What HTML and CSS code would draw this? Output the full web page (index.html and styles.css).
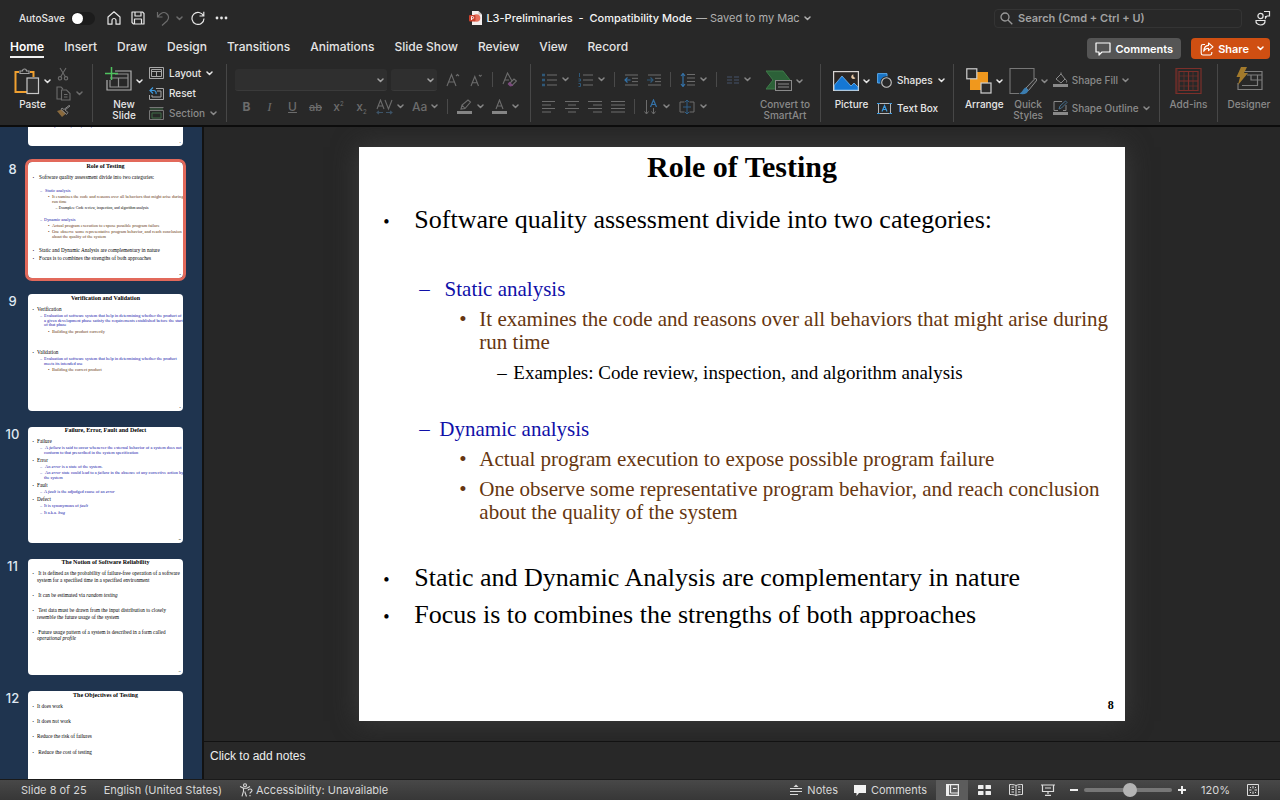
FILE: index.html
```html
<!DOCTYPE html>
<html lang="en">
<head>
<meta charset="utf-8">
<title>L3-Preliminaries</title>
<link rel="stylesheet" href="styles.css">
</head>
<body>
<svg class="defs" aria-hidden="true">
  <symbol id="chev" viewBox="0 0 7 5"><path d="M1 1l2.500 2.500L6 1" fill="none" stroke="currentColor" stroke-width="1.500" stroke-linecap="round" stroke-linejoin="round"/></symbol>
  <symbol id="comment" viewBox="0 0 16 14"><path d="M1 1h14v9H7l-3 3v-3H1z" fill="none" stroke="currentColor" stroke-width="1.200" stroke-linejoin="round"/></symbol>
</svg>
<div class="app">
  <header class="titlebar">
    <div class="quick">
      <label class="autosave">AutoSave <input type="checkbox" class="switch"></label>
      <button class="plain" aria-label="Home"><svg width="14" height="14" viewBox="0 0 14 14" fill="none" stroke="currentColor" stroke-width="1.200" stroke-linejoin="round"><path d="M1 6L7 .8 13 6v7.200H9V9.500a2 2 0 0 0-4 0v3.700H1z"/></svg></button>
      <button class="plain" aria-label="Save"><svg width="14" height="14" viewBox="0 0 14 14" fill="none" stroke="currentColor" stroke-width="1.200" stroke-linejoin="round"><path d="M1 1h10.500L13 2.500V13H2.500L1 11.500zM4 1v4h6V1M3.500 13V8h7v5"/></svg></button>
      <span class="undo dim">
        <button class="plain" aria-label="Undo"><svg width="14" height="15" viewBox="0 0 14 15" fill="none" stroke="currentColor" stroke-width="1.200"><path d="M1.500 1v5h5M1.500 6C5 1.500 8 .5 10.500 2.500s2.800 5 .5 7.500l-5 4.500"/></svg></button>
        <button class="plain" aria-label="Undo history"><svg width="7" height="5"><use href="#chev"/></svg></button>
      </span>
      <button class="plain" aria-label="Repeat"><svg width="14" height="14" viewBox="0 0 14 14" fill="none" stroke="currentColor" stroke-width="1.200"><path d="M12.500 5A6 6 0 1 0 13 7.500M12.800.8V5H8.500"/></svg></button>
      <button class="plain" aria-label="More"><svg width="13" height="4" viewBox="0 0 13 4" fill="currentColor"><circle cx="2" cy="2" r="1.400"/><circle cx="6.500" cy="2" r="1.400"/><circle cx="11" cy="2" r="1.400"/></svg></button>
    </div>
    <h1 class="doc">
      <svg width="13" height="14" viewBox="0 0 13 14"><path d="M3 0h6.500L13 3.500V14H3z" fill="#f4efee"/><path d="M9.500 0L13 3.500H9.500z" fill="#c9c1bf"/><circle cx="7.500" cy="7" r="3.800" fill="#e8705c"/><rect y="4" width="6.500" height="6.500" rx="1" fill="#c9402c"/><path d="M2.500 9V5.500h1a1 1 0 0 1 0 2.200h-1" fill="none" stroke="#fff" stroke-width=".9"/></svg>
      <span class="doc-name">L3-Preliminaries&nbsp; - &nbsp;Compatibility Mode</span>
      <span class="doc-state">— Saved to my Mac</span>
      <svg width="7" height="5" class="doc-chev"><use href="#chev"/></svg>
    </h1>
    <div class="find">
      <label class="search"><svg width="13" height="13" viewBox="0 0 13 13" fill="none" stroke="currentColor" stroke-width="1.300"><circle cx="5" cy="5" r="4"/><path d="M8 8l4.300 4.300"/></svg><input type="search" aria-label="Search" placeholder="Search (Cmd + Ctrl + U)"></label>
      <button class="plain" aria-label="Account"><svg width="16" height="16" viewBox="0 0 16 16" fill="none" stroke="currentColor" stroke-width="1.200"><circle cx="5.500" cy="6" r="2.600"/><path d="M1 10.500h9c.3 2.600-1.500 4.500-4.500 4.500S.7 13 1 10.500zM9 1.500h5.500V6h-2.500l-1.500 2V6"/></svg></button>
    </div>
  </header>

  <div class="tabrow">
    <nav class="tabs">
      <a href="#home" class="on">Home</a><a href="#insert">Insert</a><a href="#draw">Draw</a><a href="#design">Design</a><a href="#transitions">Transitions</a><a href="#animations">Animations</a><a href="#show">Slide Show</a><a href="#review">Review</a><a href="#view">View</a><a href="#record">Record</a>
    </nav>
    <div class="actions">
      <button class="pill"><svg width="16" height="14"><use href="#comment"/></svg>Comments</button>
      <button class="pill share"><svg width="14" height="14" viewBox="0 0 14 14" fill="none" stroke="currentColor" stroke-width="1.100" stroke-linejoin="round"><path d="M5 2.500H3A1.800 1.800 0 0 0 1.200 4.300v7A1.800 1.800 0 0 0 3 13h7a1.800 1.800 0 0 0 1.800-1.700V10M8.500 1L13 4.800 8.500 8.600V6.300C6 6.300 4.700 7.300 3.700 9.300 3.900 6 5.500 3.600 8.500 3.400z"/></svg>Share<svg width="7" height="5" class="share-chev"><use href="#chev"/></svg></button>
    </div>
  </div>

  <div class="ribbon">
    <section class="group g-clip">
      <button class="big"><span class="pic"><svg width="26" height="28" viewBox="0 0 26 28" fill="none"><path d="M5 5H1.500v20H13M16 5h3.500v5" stroke="#f0a030" stroke-width="2"/><path d="M6 6.500V4h2.500a2 2 0 0 1 4 0H15v2.500z" stroke="#a0a0a0" stroke-width="1.200"/><rect x="13" y="11" width="11.500" height="15.500" fill="#303030" stroke="#c8c8c8" stroke-width="1.200"/></svg><svg width="7" height="5"><use href="#chev"/></svg></span>Paste</button>
      <div class="stack dim">
        <button class="plain" aria-label="Cut"><svg width="14" height="14" viewBox="0 0 14 14" fill="none" stroke="currentColor" stroke-width="1.100"><path d="M4 1l5.500 9M10 1L4.500 10"/><circle cx="4" cy="11.300" r="1.700"/><circle cx="10" cy="11.300" r="1.700"/></svg></button>
        <button class="plain pair" aria-label="Copy"><svg width="15" height="15" viewBox="0 0 15 15" fill="none" stroke="currentColor" stroke-width="1.100"><path d="M5 13H1V1h4l2 2M5.500 4h5L14 7.500V14H5.500zM8 8.500h3.500M8 11h3.500"/></svg><svg width="7" height="5"><use href="#chev"/></svg></button>
        <button class="plain" aria-label="Format painter"><svg width="15" height="14" viewBox="0 0 15 14"><path d="M1 6l5 6 4-3.500L6 4.500z" fill="#8a6a3d"/><path d="M5 4.500l5.500 5 1.500-2L9 5l5-4-1-.5-5 4L6 3z" fill="none" stroke="#858585"/></svg></button>
      </div>
    </section>

    <section class="group g-slides">
      <button class="big"><span class="pic"><svg width="27" height="28" viewBox="0 0 27 28" fill="none"><path d="M10 4h16v19H2V13" stroke="#b0b0b0" stroke-width="1.200"/><path d="M10 7h13v13H5v-7M5 11h18M13.500 11v9" stroke="#909090" stroke-width="1.200"/><path d="M6.500 0v13M0 6.500h13" stroke="#4fc35f" stroke-width="1.500"/></svg><svg width="7" height="5"><use href="#chev"/></svg></span>New<br>Slide</button>
      <div class="stack labels">
        <button class="plain item"><svg width="15" height="12" viewBox="0 0 15 12" fill="none" stroke="#a8a8a8"><path d="M.5.5h14v11H.5zM2.500 2.500h10v7h-10zM2.500 4.500h10M7.500 4.500v5"/></svg>Layout<svg width="7" height="5"><use href="#chev"/></svg></button>
        <button class="plain item"><svg width="15" height="13" viewBox="0 0 15 13" fill="none"><path d="M7 1.500h7.500v11H.5V8M8 4h4v6H3V8" stroke="#a8a8a8"/><path d="M4 .5L1 3.500l3 3M1 3.500h3.500c2 0 3 1.500 2.500 3.500" stroke="#3d9be0" stroke-width="1.200"/></svg>Reset</button>
        <button class="plain item dim2"><svg width="15" height="13" viewBox="0 0 15 13" fill="none"><path d="M.5.5h14M.5 12.500h14v-9H.5z" stroke="#777"/><path d="M1 2h13M3 6h9v5H3z" stroke="#3f6b47"/></svg>Section<svg width="7" height="5"><use href="#chev"/></svg></button>
      </div>
    </section>

    <section class="group g-font dim">
      <div class="line">
        <span class="combo name"><select aria-label="Font"><option></option></select><svg width="7" height="5"><use href="#chev"/></svg></span>
        <span class="combo size"><select aria-label="Font size"><option></option></select><svg width="7" height="5"><use href="#chev"/></svg></span>
        <button class="plain cell" aria-label="Grow font"><svg width="14" height="14" viewBox="0 0 14 14" fill="none" stroke="currentColor" stroke-width="1.100"><path d="M1 13L5.500 1.500 10 13M2.500 9h6M10 3l1.500-1.500L13 3"/></svg></button>
        <button class="plain cell" aria-label="Shrink font"><svg width="14" height="14" viewBox="0 0 14 14" fill="none" stroke="currentColor" stroke-width="1.100"><path d="M2 13l3.800-9.500L9.500 13M3.200 9.800h5M10 2l1.300 1.300L12.600 2"/></svg></button>
        <i class="rule"></i>
        <button class="plain cell" aria-label="Clear formatting"><svg width="15" height="15" viewBox="0 0 15 15" fill="none" stroke="currentColor" stroke-width="1.100"><path d="M1 12L5.500 1 10 9M3 8h4"/><path d="M8 11l4-4 2.500 2-4.500 4.500z"/><path d="M7.500 10.500l2.800 3-2 .5-2-2z" fill="#7a4a7c" stroke="#7a4a7c"/></svg></button>
      </div>
      <div class="line tight">
        <button class="plain cell"><b>B</b></button><button class="plain cell serif"><em>I</em></button><button class="plain cell"><u>U</u></button><button class="plain cell small"><s>ab</s></button><button class="plain cell"><span>x<sup>2</sup></span></button><button class="plain cell"><span>x<sub>2</sub></span></button>
        <button class="plain pair first" aria-label="Character spacing"><svg width="17" height="16" viewBox="0 0 17 16" fill="none" stroke="currentColor" stroke-width="1.100"><path d="M1 10L4.500 1 8 10M2.300 7h4.500M9 1l3.500 9L16 1"/><path d="M1 13.500h6M3 11.800l-2 1.700 2 1.700M10 13.500h6M14 11.800l2 1.700-2 1.700" stroke="#3d5468"/></svg><svg width="7" height="5"><use href="#chev"/></svg></button>
        <button class="plain pair">Aa<svg width="7" height="5"><use href="#chev"/></svg></button>
        <i class="rule"></i>
        <button class="plain pair" aria-label="Highlight"><svg width="16" height="16" viewBox="0 0 16 16" fill="none" stroke="currentColor" stroke-width="1.100"><path d="M4 10l1-4 6-5 2.500 2L8 9.500zM5 6l3 3.500"/><path d="M0 13.500h15" stroke="#858585" stroke-width="3"/></svg><svg width="7" height="5"><use href="#chev"/></svg></button>
        <button class="plain pair" aria-label="Font colour"><svg width="16" height="16" viewBox="0 0 16 16" fill="none" stroke="currentColor" stroke-width="1.100"><path d="M4 10L7.500 1 11 10M5.200 7h4.600"/><path d="M0 13.500h15" stroke="#858585" stroke-width="3"/></svg><svg width="7" height="5"><use href="#chev"/></svg></button>
      </div>
    </section>

    <section class="group g-para dim">
      <div class="lines">
        <div class="line">
          <button class="plain pair" aria-label="Bullets"><svg width="15" height="14" viewBox="0 0 15 14" fill="none"><path d="M5 2h10M5 7h10M5 12h10" stroke="currentColor"/><path d="M0 2h3M0 7h3M0 12h3" stroke="#2f5878" stroke-width="2.500"/></svg><svg width="7" height="5"><use href="#chev"/></svg></button>
          <button class="plain pair" aria-label="Numbering"><svg width="15" height="14" viewBox="0 0 15 14" fill="none"><path d="M5 2h10M5 7h10M5 12h10" stroke="currentColor"/><path d="M1.500 0v4M.5 6h2v2h-2M.5 10.500h2v3h-2" stroke="#2f5878"/></svg><svg width="7" height="5"><use href="#chev"/></svg></button>
          <i class="rule"></i>
          <button class="plain" aria-label="Decrease indent"><svg width="14" height="12" viewBox="0 0 14 12" fill="none"><path d="M1 1h13M8 4.300h6M8 7.600h6M1 11h13" stroke="currentColor"/><path d="M6.500 6H1M3.500 3.500L1 6l2.500 2.500" stroke="#3472a8" stroke-width="1.200"/></svg></button>
          <button class="plain" aria-label="Increase indent"><svg width="14" height="12" viewBox="0 0 14 12" fill="none"><path d="M1 1h13M8 4.300h6M8 7.600h6M1 11h13" stroke="currentColor"/><path d="M0 6h5.500M3.500 3.500L6 6 3.500 8.500" stroke="#2f5878" stroke-width="1.200"/></svg></button>
          <i class="rule"></i>
          <button class="plain pair" aria-label="Line spacing"><svg width="15" height="14" viewBox="0 0 15 14" fill="none"><path d="M7 1.500h8M7 5h8M7 8.500h8M7 12h8" stroke="currentColor"/><path d="M3 0v14M1 3l2-2.500L5 3M1 11l2 2.500L5 11" stroke="#3472a8" stroke-width="1.200"/></svg><svg width="7" height="5"><use href="#chev"/></svg></button>
          <i class="rule"></i>
          <button class="plain pair" aria-label="Columns"><svg width="13" height="8" viewBox="0 0 13 8" fill="none" stroke="#44536a"><path d="M1 1h5M1 4h5M1 7h5M8 1h5M8 4h5M8 7h5"/></svg><svg width="7" height="5"><use href="#chev"/></svg></button>
        </div>
        <div class="line">
          <button class="plain" aria-label="Align left"><svg width="14" height="13" viewBox="0 0 14 13" stroke="currentColor"><path d="M0 1.500h13M0 5h9M0 8.500h13M0 12h9"/></svg></button>
          <button class="plain" aria-label="Centre"><svg width="14" height="13" viewBox="0 0 14 13" stroke="currentColor"><path d="M0 1.500h14M3 5h8M0 8.500h14M3 12h8"/></svg></button>
          <button class="plain" aria-label="Align right"><svg width="14" height="13" viewBox="0 0 14 13" stroke="currentColor"><path d="M0 1.500h14M5 5h9M0 8.500h14M5 12h9"/></svg></button>
          <button class="plain" aria-label="Justify"><svg width="14" height="13" viewBox="0 0 14 13" stroke="currentColor"><path d="M0 1.500h14M0 5h14M0 8.500h14M0 12h14"/></svg></button>
          <i class="rule"></i>
          <button class="plain pair" aria-label="Text direction"><svg width="14" height="16" viewBox="0 0 14 16" fill="none" stroke="currentColor"><path d="M2.500 1v14M.5 12.500l2 2.500 2-2.500M9.500 9v6M7.500 12.500l2 2.500 2-2.500"/><path d="M6.500 8l3-7 3 7M7.500 5.500h4" stroke="#3472a8" stroke-width="1.200"/></svg><svg width="7" height="5"><use href="#chev"/></svg></button>
          <button class="plain pair" aria-label="Align text"><svg width="16" height="14" viewBox="0 0 16 14" fill="none" stroke="currentColor"><path d="M5.500 2H1v10h4.500M10.500 2H15v10h-4.500"/><path d="M8 0v14M4 7h8M6 2l2-2 2 2M6 12l2 2 2-2" stroke="#2f5f88"/></svg><svg width="7" height="5"><use href="#chev"/></svg></button>
        </div>
      </div>
      <button class="big soft"><span class="pic"><svg width="26" height="28" viewBox="0 0 26 28"><path d="M0 4h17l7 9-7 9H0l7-9z" fill="#2c6138" stroke="#3e7a49"/><rect x="9.500" y="13.500" width="16" height="10" fill="#2b2b2b" stroke="#8a8a8a"/><path d="M12 17h11M12 20h11" stroke="#8a8a8a"/></svg><svg width="7" height="5"><use href="#chev"/></svg></span>Convert to<br>SmartArt</button>
    </section>

    <section class="group g-insert">
      <button class="big"><span class="pic"><svg width="26" height="28" viewBox="0 0 26 28"><rect x=".6" y="4.600" width="24.800" height="18.800" fill="#2b2624" stroke="#d8d4d2" stroke-width="1.200"/><path d="M1.500 18L9 9l9 10 3-3 4 4v3H1.500z" fill="#1477d4" stroke="#74b6ef" stroke-width=".8"/><path d="M20.500 7.500a2.300 2.300 0 1 0 2 3.500 2.500 2.500 0 0 1-2-3.500z" fill="#e6c7a4"/></svg><svg width="7" height="5"><use href="#chev"/></svg></span>Picture</button>
      <div class="lines labels">
        <button class="plain item"><svg width="15" height="15" viewBox="0 0 15 15"><path d="M.6.6H10v9.400H.6z" fill="#1873c5" stroke="#58a7e8"/><circle cx="9.500" cy="9.500" r="6.200" fill="#282828"/><circle cx="9.500" cy="9.500" r="4.800" fill="#282828" stroke="#c8c8c8" stroke-width="1.100"/></svg>Shapes<svg width="7" height="5"><use href="#chev"/></svg></button>
        <button class="plain item"><svg width="15" height="13" viewBox="0 0 15 13" fill="none"><path d="M1.500 1.500h12v10h-12z" stroke="#b8b8b8"/><path d="M0 1.500h3M12 1.500h3M0 11.500h3M12 11.500h3M5 9.500L7.500 3.500l2.500 6M6 7.500h3" stroke="#3d9be0" stroke-width="1.200"/></svg>Text Box</button>
      </div>
    </section>

    <section class="group g-arrange">
      <button class="big"><span class="pic"><svg width="26" height="28" viewBox="0 0 26 28" fill="#2b2b2b"><rect x="4" y="5" width="18" height="18" fill="#f0981d"/><rect x=".8" y="1.800" width="10" height="10" stroke="#d0d0d0" stroke-width="1.200"/><rect x="15" y="16" width="10" height="10" stroke="#d0d0d0" stroke-width="1.200"/></svg><svg width="7" height="5"><use href="#chev"/></svg></span>Arrange</button>
      <button class="big soft"><span class="pic"><svg width="28" height="28" viewBox="0 0 28 28" fill="none"><path d="M25 12V1.500H1v25h9" stroke="#777" stroke-width="1.100"/><path d="M26.500 11L17 21l2.500 2.500L28 13z" stroke="#909090" fill="#303030"/><path d="M17 20.500c-3 .5-3 5-7 6 4 1.500 9 .5 9.500-3.500z" fill="#3b7db0"/></svg><svg width="7" height="5"><use href="#chev"/></svg></span>Quick<br>Styles</button>
      <div class="lines labels dim2">
        <button class="plain item"><svg width="15" height="16" viewBox="0 0 15 16" fill="none" stroke="currentColor"><path d="M3 7l5-5 4 5-4 4zM8 2V.5M12 7c1.500 1 2 2 1.500 3.500"/><path d="M0 13.500h15" stroke="#8a8a8a" stroke-width="3"/></svg>Shape Fill<svg width="7" height="5"><use href="#chev"/></svg></button>
        <button class="plain item"><svg width="15" height="16" viewBox="0 0 15 16" fill="none" stroke="currentColor"><path d="M9 1.500H1v9h4M13 5v5.500H10"/><path d="M6 9l1-3 5.500-5L14 2.500 8.500 8z" stroke="#456f8f"/><path d="M0 13.500h15" stroke="#8a8a8a" stroke-width="3"/></svg>Shape Outline<svg width="7" height="5"><use href="#chev"/></svg></button>
      </div>
    </section>

    <section class="group g-one">
      <button class="big soft"><span class="pic"><svg width="27" height="28" viewBox="0 0 27 28" fill="none" stroke="#7c2f2a" stroke-width="1.200"><path d="M1 1.500h25v25H1zM4 4.500h19v19H4zM13.500 4.500v19M4 14h19"/><path d="M2 1.500v25M9 4.500v19M18 4.500v19M4 9h19M4 19h19" stroke-width=".6"/></svg></span>Add-ins</button>
    </section>
    <section class="group g-one last">
      <button class="big soft"><span class="pic"><svg width="28" height="28" viewBox="0 0 28 28" fill="none"><path d="M9 4.500h18v18H3V16M12 8h15M7 18.500h16M22.500 8v10.500M16 8v5h11" stroke="#7d7d7d" stroke-width="1.200"/><path d="M6 0h6L9 6h4L3 18l2-8H1.500z" fill="#a37a2b"/></svg></span>Designer</button>
    </section>
  </div>

  <main class="work">
    <aside class="rail">
      <div class="row cut"><span></span><div class="thumb"><div class="slide"><ul><li class="l2">Examples: unit, fault, GUI, and Thread</li></ul><footer>7</footer></div></div></div>
      <div class="row"><span>8</span><div class="thumb sel"><div class="slide">
        <h2>Role of Testing</h2>
        <ul class="roomy">
          <li class="l1">Software quality assessment divide into two categories:</li>
          <li class="l2 blank">&nbsp;Static analysis</li>
          <li class="l3">It examines the code and reasons over all behaviors that might arise during<br>run time</li>
          <li class="l4">Examples: Code review, inspection, and algorithm analysis</li>
          <li class="l2 part">Dynamic analysis</li>
          <li class="l3">Actual program execution to expose possible program failure</li>
          <li class="l3">One observe some representative program behavior, and reach conclusion<br>about the quality of the system</li>
          <li class="l1 part">Static and Dynamic Analysis are complementary in nature</li>
          <li class="l1">Focus is to combines the strengths of both approaches</li>
        </ul><footer>8</footer></div></div></div>
      <div class="row"><span>9</span><div class="thumb"><div class="slide">
        <h2>Verification and Validation</h2>
        <ul>
          <li class="l1">Verification</li>
          <li class="l2">Evaluation of software system that help in determining whether the product of<br>a given development phase satisfy the requirements established before the start<br>of that phase</li>
          <li class="l3">Building the product correctly</li>
          <li class="l1 far">Validation</li>
          <li class="l2">Evaluation of software system that help in determining whether the product<br>meets its intended use</li>
          <li class="l3">Building the correct product</li>
        </ul><footer>9</footer></div></div></div>
      <div class="row"><span>10</span><div class="thumb"><div class="slide">
        <h2>Failure, Error, Fault and Defect</h2>
        <ul>
          <li class="l1">Failure</li>
          <li class="l2">&nbsp;A <i>failure</i> is said to occur whenever the external behavior of a system does not<br>conform to that prescribed in the system specification</li>
          <li class="l1">Error</li>
          <li class="l2">&nbsp;An <i>error</i> is a state of the system.</li>
          <li class="l2">&nbsp;An <i>error</i> state could lead to a <i>failure</i> in the absence of any corrective action by<br>the system</li>
          <li class="l1">Fault</li>
          <li class="l2">A <i>fault</i> is the adjudged cause of an <i>error</i></li>
          <li class="l1">Defect</li>
          <li class="l2">It is synonymous of <i>fault</i></li>
          <li class="l2">It a.k.a. <i>bug</i></li>
        </ul><footer>10</footer></div></div></div>
      <div class="row"><span>11</span><div class="thumb"><div class="slide">
        <h2>The Notion of Software Reliability</h2>
        <ul class="airy">
          <li class="l1">&nbsp;It is defined as the probability of failure-free operation of a software<br>system for a specified time in a specified environment</li>
          <li class="l1">&nbsp;It can be estimated via <i>random testing</i></li>
          <li class="l1">&nbsp;Test data must be drawn from the input distribution to closely<br>resemble the future usage of the system</li>
          <li class="l1">&nbsp;Future usage pattern of a system is described in a form called<br><i>operational profile</i></li>
        </ul><footer>11</footer></div></div></div>
      <div class="row"><span>12</span><div class="thumb"><div class="slide">
        <h2>The Objectives of Testing</h2>
        <ul class="airy">
          <li class="l1">It does work</li>
          <li class="l1">It does not work</li>
          <li class="l1">Reduce the risk of failures</li>
          <li class="l1">&nbsp;Reduce the cost of testing</li>
        </ul></div></div></div>
    </aside>

    <div class="pane">
      <div class="stage">
        <article class="slide full">
          <h2>Role of Testing</h2>
          <ul class="roomy">
            <li class="l1">Software quality assessment divide into two categories:</li>
            <li class="l2 blank">&nbsp;Static analysis</li>
            <li class="l3">It examines the code and reasons over all behaviors that might arise during<br>run time</li>
            <li class="l4">Examples: Code review, inspection, and algorithm analysis</li>
            <li class="l2 part">Dynamic analysis</li>
            <li class="l3">Actual program execution to expose possible program failure</li>
            <li class="l3">One observe some representative program behavior, and reach conclusion<br>about the quality of the system</li>
            <li class="l1 part">Static and Dynamic Analysis are complementary in nature</li>
            <li class="l1">Focus is to combines the strengths of both approaches</li>
          </ul>
          <footer>8</footer>
        </article>
      </div>
      <textarea class="notes" aria-label="Notes" placeholder="Click to add notes"></textarea>
    </div>
  </main>

  <footer class="status">
    <div class="status-left">
      <span>Slide 8 of 25</span>
      <span>English (United States)</span>
      <button class="plain item"><svg width="14" height="14" viewBox="0 0 14 14" fill="none" stroke="currentColor" stroke-width="1.100"><circle cx="6" cy="2.200" r="1.500"/><path d="M1 3.500l3.500 1.700v3L3 13.300M11 3.500L7.800 5.200H4.500M6 8.500v1l1.500 4M9 7.500c.3-2 4-2 4 0 0 1.500-2 1.500-2 3M11 12v1.200"/></svg>Accessibility: Unavailable</button>
    </div>
    <div class="status-right">
      <button class="plain item"><svg width="12" height="12" viewBox="0 0 12 12" stroke="currentColor" fill="currentColor"><path d="M0 4.500h12M0 7.500h12M0 10.500h8"/><path d="M3.500 3L6 .5 8.500 3z" stroke="none"/></svg>Notes</button>
      <button class="plain item c2"><svg width="12" height="11" viewBox="0 0 12 11" fill="#f2f2f2"><path d="M0 0h12v8H5l-2.500 3V8H0z"/></svg>Comments</button>
      <button class="plain view on" aria-label="Normal view"><svg width="13" height="12" viewBox="0 0 13 12" fill="none" stroke="#eee" stroke-width="1.200"><path d="M.6.6h11.800v10.800H.6zM4.500 1v8M4.500 9h8M7 4.500h3.500"/><path d="M2 1v10" stroke-width="2"/></svg></button>
      <button class="plain view" aria-label="Slide sorter"><svg width="13" height="10" viewBox="0 0 13 10" fill="#eee"><rect width="5.500" height="4" rx=".6"/><rect x="7.500" width="5.500" height="4" rx=".6"/><rect y="6" width="5.500" height="4" rx=".6"/><rect x="7.500" y="6" width="5.500" height="4" rx=".6"/></svg></button>
      <button class="plain view" aria-label="Reading view"><svg width="14" height="12" viewBox="0 0 14 12" fill="none" stroke="#ddd"><path d="M7 1.500C5 .5 3 .5.500.5v10c2.500 0 4.500 0 6.500 1 2-1 4-1 6.500-1V.5C11 .5 9 .5 7 1.500zM7 1.500v10M2.500 3h2.500M2.500 5.500h2.500M2.500 8h2.500M9 3h2.500M9 5.500h2.500M9 8h2.500"/></svg></button>
      <button class="plain view" aria-label="Slide show"><svg width="14" height="12" viewBox="0 0 14 12" fill="none" stroke="#ddd" stroke-width="1.200"><path d="M0 1h14M1.500 1v6.500h11V1M4 4h6M7 7.500V10M4 11.300h6"/></svg></button>
      <button class="plain" aria-label="Zoom out"><svg width="8" height="8" stroke="#eee" stroke-width="2"><path d="M0 4h8"/></svg></button>
      <input class="zoom" type="range" min="0" max="100" value="53" aria-label="Zoom">
      <button class="plain" aria-label="Zoom in"><svg width="8" height="8" stroke="#eee" stroke-width="2"><path d="M0 4h8M4 0v8"/></svg></button>
      <span class="percent">120%</span>
      <button class="plain" aria-label="Fit slide"><svg width="12" height="12" viewBox="0 0 12 12" fill="none" stroke="#ddd"><path d="M.5.5h11v11H.5zM6 2v2.500M6 7.500V10M2 6h2.500M7.500 6H10M3 3l1 1M9 3L8 4M3 9l1-1M9 9L8 8"/></svg></button>
    </div>
  </footer>
</div>
</body>
</html>
```
FILE: styles.css
```css
* { box-sizing: border-box; }
body { margin: 0; background: #282828; color: #e6e6e6; font: 500 11px/14px Inter, "Liberation Sans", sans-serif; }
.defs { position: absolute; width: 0; height: 0; }
svg { display: block; flex: none; }
.app { display: grid; grid-template-rows: auto auto auto minmax(0, 1fr) auto; height: 100vh; overflow: hidden; }
button { font: inherit; color: inherit; }
.plain, .big { display: flex; align-items: center; background: none; border: 0; padding: 0; white-space: nowrap; }
.dim { color: #6c6c6c; }
.dim2, .soft { color: #8a8a8a; }

/* Title bar */
.titlebar { display: grid; grid-template-columns: 1fr auto 1fr; align-items: center; height: 36px; }
.quick { display: flex; align-items: center; gap: 10px; padding-left: 19px; }
.autosave { display: flex; align-items: center; gap: 6px; font-size: 10px; margin-right: 2px; }
.switch { appearance: none; margin: 0; width: 24px; height: 13px; border-radius: 7px; background: #1c1c1c; }
.switch::before { content: ""; display: block; width: 11px; height: 11px; margin: 1px; border-radius: 50%; background: #fff; }
.undo { display: flex; align-items: center; gap: 6px; margin: 0 -2px 0 1px; }
.doc { display: flex; align-items: center; gap: 4px; margin: 0; font-size: 11px; font-weight: 400; white-space: nowrap; }
.doc-name { font-weight: 500; color: #f4f4f4; }
.doc-state, .doc-chev { color: #b0b0b0; }
.find { display: flex; justify-content: flex-end; align-items: center; gap: 13px; padding-right: 9px; }
.search { display: flex; align-items: center; gap: 5px; width: 248px; height: 19px; padding: 0 5px; border: 1px solid #343434; border-radius: 4px; color: #999; }
.search input { flex: 1; min-width: 0; border: 0; padding: 0; background: none; color: inherit; font: inherit; font-weight: 600; }
.search input::placeholder { color: #a2a2a2; }

/* Tabs */
.tabrow { display: flex; justify-content: space-between; height: 28px; padding: 0 10px; }
.tabs { display: flex; gap: 20px; font-size: 12px; font-weight: 500; }
.tabs a { height: 22px; line-height: 21px; color: #e4e4e4; text-decoration: none; white-space: nowrap; }
.tabs .on { color: #fff; font-weight: 600; border-bottom: 2px solid #f0f0f0; }
.actions { display: flex; gap: 10px; }
.pill { display: flex; align-items: center; gap: 4px; height: 21px; margin-top: 2px; padding: 0 8px; border: 0; border-radius: 4px; background: #555; color: #fff; font-size: 11px; font-weight: 600; }
.share { background: #cf4f12; padding: 0 6px 0 9px; }
.share-chev { margin-left: 4px; }

/* Ribbon */
.ribbon { display: grid; grid-template-columns: 93px 134px 304px 290px 133px 206px 58px 1fr; height: 63px; padding-bottom: 7px; border-bottom: 2px solid #0c0c0c; font-size: 10px; }
.group { border-right: 1px solid #474747; display: flex; align-items: flex-start; }
.group.last { border-right: 0; }
.big { flex-direction: column; margin-top: 3px; line-height: 11px; }
.pic { display: flex; align-items: center; gap: 4px; margin-bottom: 4px; }
.stack { display: flex; flex-direction: column; justify-content: space-between; height: 52px; margin-top: 3px; }
.pair, .item { gap: 5px; }
.g-clip { padding-left: 14px; gap: 5px; }
.g-slides { padding-left: 12px; gap: 6px; }
.g-slides .stack { margin-top: 2px; height: 54px; }
.labels { font-size: 10px; }
.g-font { flex-direction: column; padding: 2px 0 0 8px; }
.line { display: flex; align-items: center; height: 27px; }
.cell { width: 23px; justify-content: center; font-size: 12px; }
.cell.serif { font-family: "Liberation Serif", serif; font-size: 13px; }
.cell.small { font-size: 11px; }
.cell sup, .cell sub { font-size: 6px; line-height: 0; }
.combo { position: relative; margin-right: 4px; }
.combo select { display: block; appearance: none; width: 100%; height: 22px; border: 0; border-bottom: 1px solid #3a3a3a; border-radius: 3px; background: #2f2f2f; color: inherit; }
.combo svg { position: absolute; right: 3px; top: 9px; color: #a0a0a0; }
.name { width: 152px; }
.size { width: 46px; }
.rule { width: 1px; height: 15px; background: #4a4a4a; margin: 0 5px; }
.line .pair > svg:last-child { color: #858585; }
.tight .pair { font-size: 12px; margin-right: 8px; gap: 4px; }
.tight .first { margin-left: 3px; }
.tight .rule { margin: 0 9px 0 1px; }
.g-para { padding-left: 11px; justify-content: space-between; padding-right: 10px; }
.lines { display: flex; flex-direction: column; padding-top: 2px; }
.g-para .line { gap: 9px; }
.g-para .rule { margin: 0; }
.g-insert { padding-left: 12px; gap: 7px; }
.lines.labels > button { height: 28px; }
.g-arrange { padding-left: 11px; gap: 5px; }
.g-arrange .item { gap: 4px; }
.g-one { justify-content: center; }

/* Slide rail */
.work { display: grid; grid-template-columns: 204px minmax(0, 1fr); min-height: 0; }
.rail { display: flex; flex-direction: column; gap: 16px; overflow: hidden; background: #1f344f; border-right: 2px solid #121212; }
.row { display: grid; grid-template-columns: 25px 155px; column-gap: 3px; flex: none; }
.row > span { font-size: 13px; text-align: center; color: #dfe8f2; }
.cut { height: 19px; align-items: end; overflow: hidden; }
.cut .slide ul { margin-top: auto; margin-bottom: 60px; }
.cut .slide footer { margin-top: 0; }
.thumb { border-radius: 4px; overflow: hidden; background: #fff; }
.thumb.sel { outline: 3px solid #e2695b; }
.thumb .slide { zoom: 0.2; width: 775px; }
.thumb .l2, .thumb .l3 { font-size: 22px; line-height: 24px; }

/* Slides */
.slide { display: flex; flex-direction: column; aspect-ratio: 4 / 3; padding: 3px 11px 8px 0; background: #fff; color: #000; font-family: "Liberation Serif", "Times New Roman", serif; font-weight: 400; white-space: nowrap; }
.slide.full { height: calc(100% - 40px); box-shadow: 0 0 24px #3c3c3c; }
.slide h2 { margin: 0 0 21px 11px; font-size: 30px; line-height: 34px; text-align: center; }
.slide ul { margin: 0; padding: 0; list-style: none; }
.slide li + li { margin-top: 7px; }
.slide li::before { display: inline-block; line-height: 1; }
.l1 { padding-left: 45px; font-size: 26px; line-height: 30px; }
.l2 { padding-left: 80px; font-size: 21px; line-height: 23px; color: #1010a8; }
.l3 { padding-left: 120px; font-size: 21px; line-height: 23px; color: #663610; }
.l4 { padding-left: 154px; font-size: 19px; line-height: 23px; }
.l1::before { content: "•"; width: 22px; margin-left: -22px; font-size: 18px; }
.l2::before { content: "–"; width: 20px; margin-left: -20px; }
.l3::before { content: "•"; width: 20px; margin-left: -20px; }
.l4::before { content: "–"; width: 16px; margin-left: -16px; }
.roomy .l1 { padding-left: 55px; }
.roomy .l1::before { width: 31px; margin-left: -31px; }
.slide li.blank { margin-top: 43px; }
.slide li.l2.part { margin-top: 34px; }
.slide li.l1.part { margin-top: 39px; }
.slide li.far { margin-top: 72px; }
.slide .airy li + li { margin-top: 44px; }
.slide footer { margin-top: auto; text-align: right; font-size: 12px; line-height: 16px; font-weight: 700; }

.pane { display: flex; flex-direction: column; min-width: 0; min-height: 0; }
.stage { flex: 1; min-height: 0; display: flex; align-items: center; justify-content: center; overflow: hidden; background: #272727; }
.notes { display: block; width: 100%; height: 38px; resize: none; border: 0; border-top: 1px solid #121212; padding: 7px 6px; background: #282828; color: #eee; font: 12px/14px "Liberation Sans", Arial, sans-serif; }
.notes::placeholder { color: #eee; }

/* Status bar */
.status { display: flex; justify-content: space-between; height: 21px; border-top: 1px solid #1a1a1a; background: linear-gradient(#484848, #373737); color: #d8d8d8; font-weight: 400; }
.status-left, .status-right { display: flex; align-items: center; white-space: nowrap; }
.status-left { gap: 17px; padding-left: 21px; }
.status-left .item { gap: 3px; }
.status-right { padding-right: 21px; }
.c2 { margin: 0 9px 0 16px; }
.view { width: 32px; height: 20px; justify-content: center; }
.view.on { background: #5c5c5c; }
.view + .plain:not(.view) { margin-left: 6px; }
.zoom { appearance: none; width: 88px; height: 14px; margin: 0 6px; background: none; }
.zoom::-webkit-slider-runnable-track { height: 4px; border-radius: 2px; background: #777; }
.zoom::-webkit-slider-thumb { appearance: none; width: 14px; height: 14px; margin-top: -5px; border-radius: 50%; background: #b4b4b4; }
.percent { margin: 0 17px 0 15px; }
```
